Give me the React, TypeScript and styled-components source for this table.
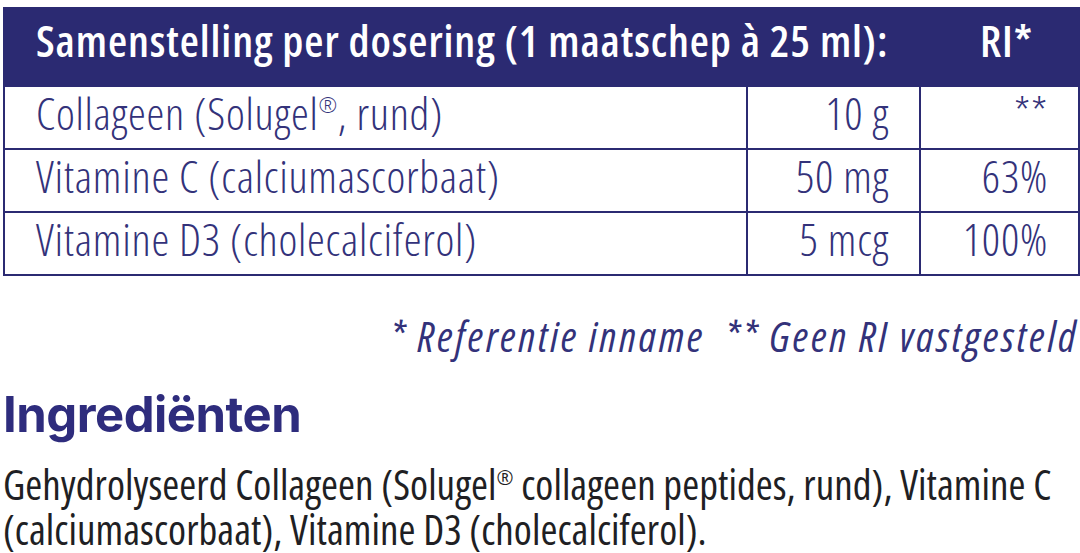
import React from "react";
import styled, { createGlobalStyle } from "styled-components";

const Global = createGlobalStyle`
  html, body { margin: 0; padding: 0; background: #ffffff; }
  body { font-family: "Open Sans", sans-serif; font-stretch: 75%; }
`;

const NAVY = "#2b2a72";
const TEXT_NAVY = "#33327a";

const Page = styled.div`
  width: 1075px;
  padding: 7px 2px 0 3px;
  display: flex;
  flex-direction: column;
`;

const Table = styled.table`
  width: 1075px;
  border-collapse: collapse;
  table-layout: fixed;
  border: 2px solid ${NAVY};
`;

const HeadRow = styled.tr`
  background: ${NAVY};
  height: 78px;
`;

const HeadCell = styled.th<{ $align?: string; $pr?: number }>`
  color: #ffffff;
  font-family: "Open Sans", sans-serif;
  font-stretch: 80%;
  font-weight: 600;
  font-size: 44px;
  line-height: 56px;
  letter-spacing: 0.9px;
  text-align: ${(p) => p.$align || "left"};
  padding: 0 ${(p) => p.$pr ?? 30}px 14px 31px;
  white-space: nowrap;
`;

const BodyRow = styled.tr`
  height: 63px;
`;

const Cell = styled.td<{ $align?: string }>`
  border: 2px solid ${NAVY};
  color: ${TEXT_NAVY};
  font-family: "Open Sans", sans-serif;
  font-stretch: 75%;
  font-size: 45px;
  line-height: 48px;
  letter-spacing: 0.75px;
  font-weight: 330;
  text-align: ${(p) => p.$align || "left"};
  padding: 0 30px 10px 31px;
  white-space: nowrap;
`;

const Reg = styled.sup`
  font-size: 0.5em;
  vertical-align: 0.75em;
  line-height: 0;
`;

const Footnote = styled.p`
  margin: 38px 0 0 0;
  text-align: right;
  font-style: italic;
  font-stretch: 75%;
  font-weight: 400;
  font-size: 42px;
  line-height: 44px;
  letter-spacing: 2.6px;
  color: ${TEXT_NAVY};
  white-space: pre;
`;

const Heading = styled.h2`
  margin: 34px 0 0 0;
  font-family: "Inter", "Lato", sans-serif;
  font-stretch: normal;
  font-weight: 700;
  font-size: 49px;
  line-height: 46px;
  color: #2e2c7d;
  letter-spacing: -0.5px;
`;

const Paragraph = styled.p`
  margin: 24px 0 0 0;
  font-stretch: 75%;
  font-weight: 380;
  font-size: 41px;
  line-height: 45px;
  letter-spacing: 0.05px;
  color: #1f1f24;
  width: 1075px;
`;

const rows = [
  { name: <>Collageen (Solugel<Reg>®</Reg>, rund)</>, amount: "10 g", ri: "**" },
  { name: <>Vitamine C (calciumascorbaat)</>, amount: "50 mg", ri: "63%" },
  { name: <>Vitamine D3 (cholecalciferol)</>, amount: "5 mcg", ri: "100%" },
];

export default function App() {
  return (
    <>
      <Global />
      <Page>
        <Table>
          <colgroup>
            <col style={{ width: 743 }} />
            <col style={{ width: 173 }} />
            <col style={{ width: 159 }} />
          </colgroup>
          <thead>
            <HeadRow>
              <HeadCell colSpan={2}>Samenstelling per dosering (1 maatschep à 25 ml):</HeadCell>
              <HeadCell $align="right" $pr={45}>RI*</HeadCell>
            </HeadRow>
          </thead>
          <tbody>
            {rows.map((r, i) => (
              <BodyRow key={i}>
                <Cell>{r.name}</Cell>
                <Cell $align="right">{r.amount}</Cell>
                <Cell $align="right">{r.ri}</Cell>
              </BodyRow>
            ))}
          </tbody>
        </Table>
        <Footnote>{"* Referentie inname  ** Geen RI vastgesteld"}</Footnote>
        <Heading>Ingrediënten</Heading>
        <Paragraph>
          Gehydrolyseerd Collageen (Solugel<Reg>®</Reg> collageen peptides, rund), Vitamine C (calciumascorbaat), Vitamine D3 (cholecalciferol).
        </Paragraph>
      </Page>
    </>
  );
}
